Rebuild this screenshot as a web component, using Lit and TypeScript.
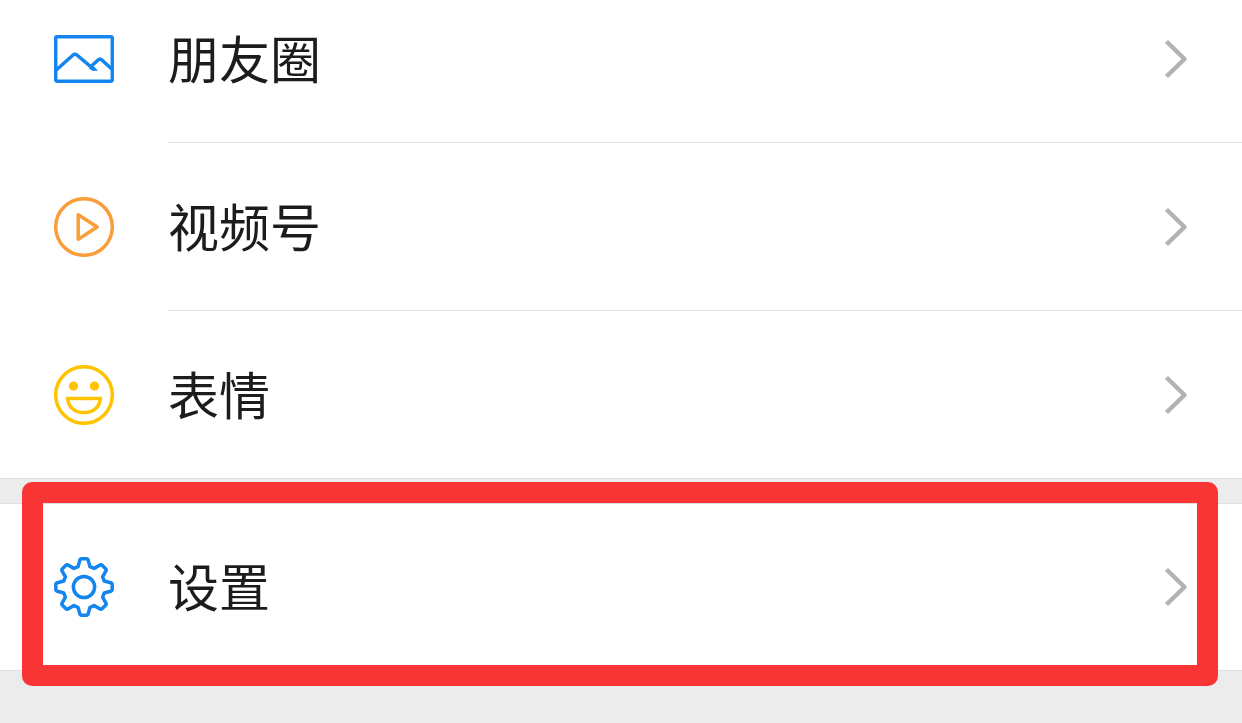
import { LitElement, html, css, svg } from "lit";
import { customElement } from "lit/decorators.js";

type Item = { label: string; tone: string; icon: unknown };

// Outline of a cog with eight teeth, centred on the origin.
const cogPath = (): string => {
  const tooth: [number, number][] = [
    [-6, -20.3],
    [-4, -27.4],
    [-3, -28.2],
    [3, -28.2],
    [4, -27.4],
    [6, -20.3],
  ];
  const points: string[] = [];
  for (let i = 0; i < 8; i++) {
    const a = (i * Math.PI) / 4;
    for (const [x, y] of tooth) {
      const px = x * Math.cos(a) - y * Math.sin(a);
      const py = x * Math.sin(a) + y * Math.cos(a);
      points.push(`${px.toFixed(2)} ${py.toFixed(2)}`);
    }
  }
  return `M${points.join("L")}Z`;
};

const photo = svg`
  <rect x="-28.3" y="-22.3" width="56.6" height="44.6" rx="1.5" />
  <path d="M-28 11.2L-11.2 -3.8Q-9 -5.7 -6.8 -3.8L10.2 10.6M7 7.5L13.8 1.2Q16 -.8 18.2 1.2L28 10.2" />
  <path class="solid" d="M6 7.5L10.5 8L14 11.8H8.5L5 9.5Z" />`;
const video = svg`
  <circle r="28.3" />
  <path d="M-5.8 -12.2V12.2L13.2 0Z" />`;
const smile = svg`
  <circle r="28.3" />
  <circle class="solid" cx="-10.5" cy="-9" r="4.6" />
  <circle class="solid" cx="10.5" cy="-9" r="4.6" />
  <path stroke-linejoin="miter" d="M-16.3 3.4H16.3C16 12 9 17.6 0 17.6S-16 12 -16.3 3.4Z" />`;
const cog = svg`
  <path d=${cogPath()} />
  <circle r="10.6" />`;

@customElement("app-root")
export class AppRoot extends LitElement {
  static styles = css`
    :host {
      display: block;
      min-height: 100vh;
      overflow: hidden;
      background: #ececec;
      font-family: "Noto Sans CJK SC", sans-serif;
    }
    .group {
      position: relative;
      background: #fff;
      border-bottom: 1px solid #e0e0e0;
    }
    .discover {
      margin-top: -25px;
    }
    .settings {
      margin-top: 24px;
      border-top: 1px solid #e0e0e0;
    }
    .row {
      display: flex;
      align-items: stretch;
      gap: 54px;
      width: 100%;
      padding: 0 0 0 54px;
      border: 0;
      background: none;
      font: inherit;
      color: #1c1c1c;
      text-align: left;
      cursor: pointer;
    }
    .icon {
      flex: none;
      align-self: center;
      width: 60px;
      height: 60px;
      fill: none;
      stroke: currentColor;
      stroke-width: 3.5;
      stroke-linejoin: round;
    }
    .solid {
      fill: currentColor;
      stroke: none;
    }
    .blue {
      color: #1485ee;
    }
    .orange {
      color: #fa9d3b;
    }
    .yellow {
      color: #ffc300;
    }
    .body {
      flex: 1;
      display: flex;
      align-items: center;
      justify-content: space-between;
      height: 167px;
      padding-right: 54px;
      border-bottom: 1px solid #e0e0e0;
    }
    .row:last-of-type .body {
      border-bottom: 0;
    }
    .settings .body {
      height: 166px;
    }
    .label {
      padding-bottom: 4px;
      font-size: 51px;
      line-height: 72px;
    }
    .arrow {
      flex: none;
      width: 24px;
      height: 40px;
      fill: none;
      stroke: #b2b2b2;
      stroke-width: 4.5;
      stroke-linejoin: round;
    }
    .highlight {
      position: absolute;
      inset: -22px 24px -16px 22px;
      border: 21px solid #f83434;
      border-radius: 10px;
      pointer-events: none;
    }
  `;

  private discover: Item[] = [
    { label: "朋友圈", tone: "blue", icon: photo },
    { label: "视频号", tone: "orange", icon: video },
    { label: "表情", tone: "yellow", icon: smile },
  ];

  private row(item: Item) {
    return html`
      <button class="row" type="button">
        <svg class="icon ${item.tone}" viewBox="-30 -30 60 60" aria-hidden="true">${item.icon}</svg>
        <span class="body">
          <span class="label">${item.label}</span>
          <svg class="arrow" viewBox="0 0 24 40" aria-hidden="true">
            <path d="M2.5 2.5L20.5 20L2.5 37.5" />
          </svg>
        </span>
      </button>
    `;
  }

  render() {
    return html`
      <nav class="group discover">${this.discover.map((item) => this.row(item))}</nav>
      <section class="group settings">
        ${this.row({ label: "设置", tone: "blue", icon: cog })}
        <div class="highlight"></div>
      </section>
    `;
  }
}
